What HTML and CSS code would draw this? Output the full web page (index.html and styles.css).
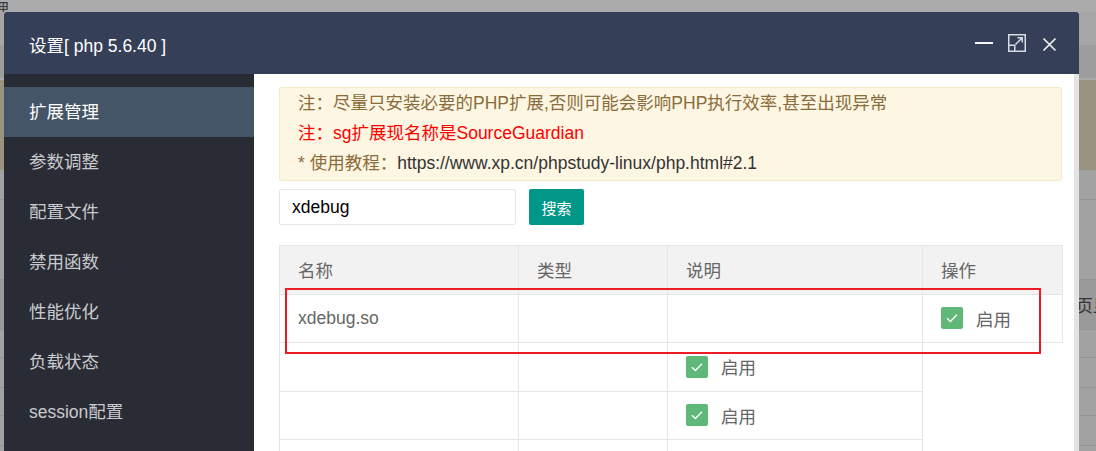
FILE: index.html
```html
<!DOCTYPE html>
<html lang="zh-CN">
<head>
<meta charset="utf-8">
<title>设置 php 5.6.40</title>
<link rel="stylesheet" href="styles.css">
</head>
<body>
<div class="page">
  <div class="page-top"><span class="page-crumb">理</span></div>
  <div class="page-bar"></div>
  <div class="page-bar2"></div>
  <div class="page-panel"></div>
  <div class="page-row"></div>
  <div class="page-row tall"></div>
  <div class="page-row dark"><span class="page-text">页显</span></div>
  <div class="page-row small"></div>
  <div class="page-row"></div>
  <div class="page-row small"></div>
  <div class="page-row"></div>
</div>

<div class="layer">
  <div class="layer-title">
    <span class="layer-name">设置[ php 5.6.40 ]</span>
    <div class="layer-tools">
      <span class="tool-min"></span>
      <svg class="tool-max" width="18" height="18" viewBox="0 0 18 18">
        <path d="M0.75 11 V0.75 H17.25 V17.25 H7" fill="none" stroke="#d6dae3" stroke-width="1.5"/>
        <rect x="0.75" y="11.25" width="6" height="6" fill="none" stroke="#d6dae3" stroke-width="1.5"/>
        <path d="M7.5 10.5 L14 4 M9.5 3.75 H14.25 V8.5" fill="none" stroke="#d6dae3" stroke-width="1.5"/>
      </svg>
      <svg class="tool-close" width="15" height="15" viewBox="0 0 15 15">
        <path d="M1.5 1.5 L13.5 13.5 M13.5 1.5 L1.5 13.5" stroke="#f2f3f6" stroke-width="1.6"/>
      </svg>
    </div>
  </div>
  <div class="layer-body">
    <aside class="side">
      <ul class="side-menu">
        <li class="side-item active">扩展管理</li>
        <li class="side-item">参数调整</li>
        <li class="side-item">配置文件</li>
        <li class="side-item">禁用函数</li>
        <li class="side-item">性能优化</li>
        <li class="side-item">负载状态</li>
        <li class="side-item">session配置</li>
      </ul>
    </aside>
    <main class="content">
      <div class="notice">
        <p class="notice-line">注：尽量只安装必要的PHP扩展,否则可能会影响PHP执行效率,甚至出现异常</p>
        <p class="notice-line red">注：sg扩展现名称是SourceGuardian</p>
        <p class="notice-line">* 使用教程：<span class="notice-link">https://www.xp.cn/phpstudy-linux/php.html#2.1</span></p>
      </div>
      <div class="search">
        <input class="search-input" type="text" value="xdebug">
        <button class="search-btn" type="button">搜索</button>
      </div>
      <table class="ext-table">
        <colgroup>
          <col class="c-name"><col class="c-type"><col class="c-desc"><col class="c-op">
        </colgroup>
        <thead>
          <tr><th>名称</th><th>类型</th><th>说明</th><th>操作</th></tr>
        </thead>
        <tbody>
          <tr>
            <td>xdebug.so</td><td></td><td></td>
            <td><span class="check"><span class="check-box"><svg width="22" height="22" viewBox="0 0 22 22"><path d="M6 11.2 L9.4 14.4 L16 7.8" fill="none" stroke="#fff" stroke-width="1.4"/></svg></span><span class="check-label">启用</span></span></td>
          </tr>
          <tr>
            <td></td><td></td>
            <td><span class="check"><span class="check-box"><svg width="22" height="22" viewBox="0 0 22 22"><path d="M6 11.2 L9.4 14.4 L16 7.8" fill="none" stroke="#fff" stroke-width="1.4"/></svg></span><span class="check-label">启用</span></span></td>
          </tr>
          <tr>
            <td></td><td></td>
            <td><span class="check"><span class="check-box"><svg width="22" height="22" viewBox="0 0 22 22"><path d="M6 11.2 L9.4 14.4 L16 7.8" fill="none" stroke="#fff" stroke-width="1.4"/></svg></span><span class="check-label">启用</span></span></td>
          </tr>
          <tr>
            <td></td><td></td><td></td>
          </tr>
        </tbody>
      </table>
    </main>
    <div class="scroll-track"></div>
  </div>
</div>

<div class="highlight"></div>
</body>
</html>
```

FILE: styles.css
```css
* { box-sizing: border-box; }

html, body {
  margin: 0;
  padding: 0;
  width: 1096px;
  height: 451px;
  overflow: hidden;
}

body {
  font-family: "Liberation Sans", "Noto Sans CJK SC", Arial, sans-serif;
  background: #a2a2a2;
  position: relative;
}

/* dimmed page underneath */
.page {
  display: flex;
  flex-direction: column;
  height: 451px;
  overflow: hidden;
}
.page-top {
  height: 12px;
  flex: none;
  background: #ababab;
  overflow: hidden;
}
.page-crumb {
  display: block;
  font-size: 17px;
  line-height: 20px;
  color: #3a3a3a;
  margin-top: 1px;
  text-indent: -8px;
}
.page-bar { height: 33px; flex: none; background: #a6a6a6; }
.page-bar2 { height: 35px; flex: none; background: #9d9d9d; border-bottom: 2px solid #a9a9a9; }
.page-panel { height: 90px; flex: none; background: #99937f; }
.page-row { height: 30px; flex: none; background: #a2a2a2; border-bottom: 1px solid #949494; }
.page-row.tall { height: 80px; }
.page-row.dark { height: 50px; background: #9a9a9a; display: flex; align-items: center; justify-content: flex-end; overflow: hidden; }
.page-row.small { height: 28px; }
.page-text { font-size: 17px; color: #333; margin-right: -14px; }

/* modal */
.layer {
  position: absolute;
  left: 4px;
  top: 12px;
  width: 1075px;
  height: 439px;
  overflow: hidden;
  display: flex;
  flex-direction: column;
  background: #fff;
  border-radius: 2px 2px 0 0;
}
.layer-title {
  height: 62px;
  flex: none;
  background: #353f58;
  border-radius: 2px 2px 0 0;
  display: flex;
  align-items: center;
  justify-content: space-between;
  padding: 0 22px 0 25px;
}
.layer-name {
  color: #fff;
  font-size: 17.5px;
  margin-top: 2px;
}
.layer-tools {
  display: flex;
  align-items: center;
}
.tool-min {
  display: block;
  width: 18px;
  height: 2px;
  background: #f4f5f7;
  margin-right: 15px;
}
.tool-max { display: block; margin-right: 16px; }
.tool-close { display: block; margin-top: 2px; }

.layer-body {
  flex: 1;
  display: flex;
  min-height: 0;
}

.side {
  width: 250px;
  flex: none;
  background: #292c35;
  padding-top: 13px;
}
.side-menu {
  list-style: none;
  margin: 0;
  padding: 0;
}
.side-item {
  height: 50px;
  line-height: 50px;
  padding-left: 25px;
  font-size: 17.5px;
  color: #c9cacd;
}
.side-item.active {
  background: #435566;
  color: #fff;
}

.content {
  flex: 1;
  padding: 13px 12px 0 25px;
  min-width: 0;
  overflow: hidden;
}
.scroll-track {
  width: 5px;
  flex: none;
  background: #e3e3e3;
}

.notice {
  background: #fdf6e3;
  border: 1px solid #f6e9c6;
  border-radius: 3px;
  padding: 0 18px 2px;
}
.notice-line {
  margin: 0;
  line-height: 30px;
  font-size: 17.5px;
  color: #8a6d3b;
  white-space: nowrap;
}
.notice-line.red { color: #ff0000; }
.notice-link { color: #333; }

.search {
  display: flex;
  gap: 13px;
  margin-top: 8px;
}
.search-input {
  width: 237px;
  height: 36px;
  border: 1px solid #e6e6e6;
  border-radius: 2px;
  padding: 0 12px;
  font-family: inherit;
  font-size: 17.5px;
  color: #000;
  outline: none;
}
.search-btn {
  width: 55px;
  height: 36px;
  border: none;
  border-radius: 2px;
  background: #009688;
  color: #fff;
  font-family: inherit;
  font-size: 15px;
  padding: 0;
}

.ext-table {
  margin-top: 20px;
  width: 783px;
  table-layout: fixed;
  border-collapse: collapse;
}
.c-name { width: 239px; }
.c-type { width: 149px; }
.c-desc { width: 255px; }
.c-op { width: 140px; }
.ext-table th,
.ext-table td {
  border: 1px solid #e6e6e6;
  height: 48.5px;
  padding: 0 0 0 18px;
  text-align: left;
  font-weight: normal;
  font-size: 17.5px;
  color: #666;
  vertical-align: middle;
}
.ext-table thead tr { background: #f2f2f2; }

.check {
  display: inline-flex;
  align-items: center;
  gap: 13px;
  vertical-align: middle;
}
.check-box {
  width: 22px;
  height: 22px;
  background: #5fb878;
  border-radius: 2px;
  display: block;
}
.check-box svg { display: block; }
.check-label { color: #666; font-size: 17.5px; }

/* annotation */
.highlight {
  position: absolute;
  left: 285px;
  top: 288px;
  width: 756px;
  height: 66px;
  border: 2px solid #ed1c24;
}
```
